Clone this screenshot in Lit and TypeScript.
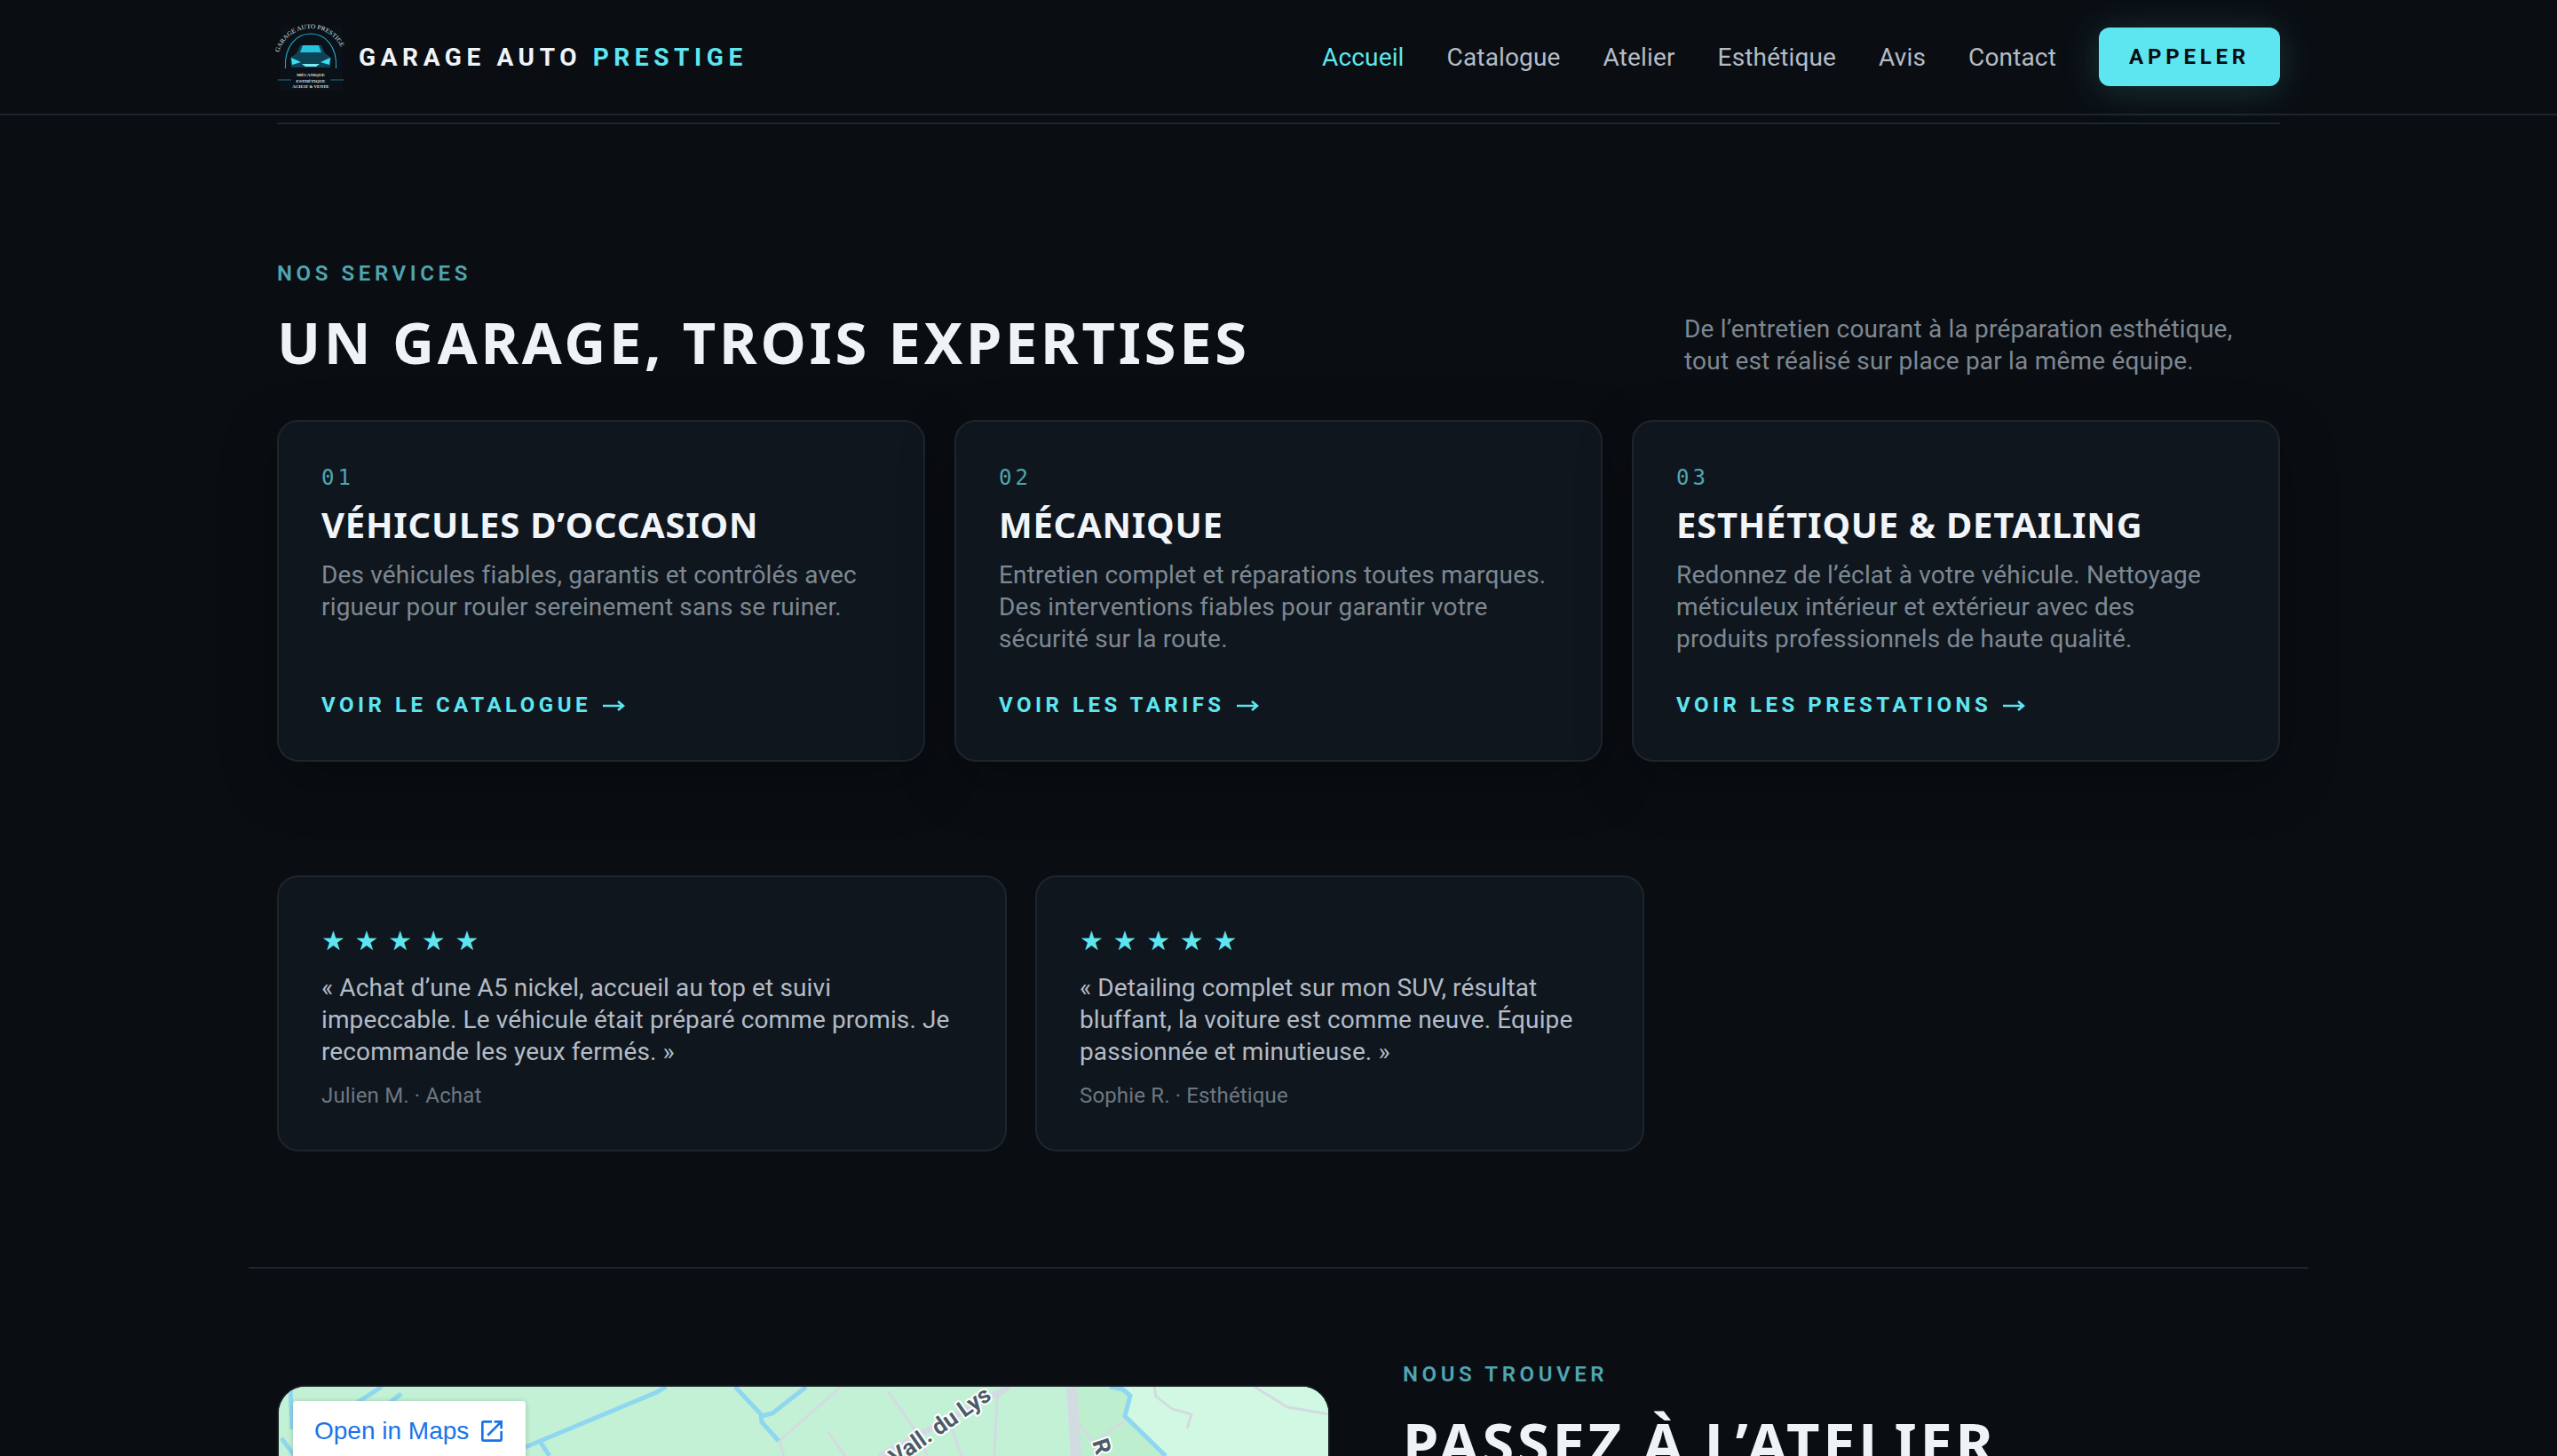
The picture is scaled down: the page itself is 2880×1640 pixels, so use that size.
import { LitElement, html, css, svg } from "lit";
import { customElement } from "lit/decorators.js";

const services = [
  { n: "01", t: "VÉHICULES D’OCCASION", d: ["Des véhicules fiables, garantis et contrôlés avec", "rigueur pour rouler sereinement sans se ruiner."], l: "VOIR LE CATALOGUE" },
  { n: "02", t: "MÉCANIQUE", d: ["Entretien complet et réparations toutes marques.", "Des interventions fiables pour garantir votre", "sécurité sur la route."], l: "VOIR LES TARIFS" },
  { n: "03", t: "ESTHÉTIQUE & DETAILING", d: ["Redonnez de l’éclat à votre véhicule. Nettoyage", "méticuleux intérieur et extérieur avec des", "produits professionnels de haute qualité."], l: "VOIR LES PRESTATIONS" },
];
const reviews = [
  { q: ["« Achat d’une A5 nickel, accueil au top et suivi", "impeccable. Le véhicule était préparé comme promis. Je", "recommande les yeux fermés. »"], a: "Julien M. · Achat" },
  { q: ["« Detailing complet sur mon SUV, résultat", "bluffant, la voiture est comme neuve. Équipe", "passionnée et minutieuse. »"], a: "Sophie R. · Esthétique" },
];
const nav = ["Accueil", "Catalogue", "Atelier", "Esthétique", "Avis", "Contact"];

const logo = html`<svg class="logo" viewBox="0 0 80 76" width="80" height="76" aria-hidden="true">
  <defs><path id="arc" d="M2 31 A37.5 37.5 0 0 1 74 31"></path></defs>
  <rect x="4" y="2" width="70" height="72" fill="#0a1118"></rect>
  <text font-family="Liberation Serif, serif" font-size="7" fill="#d8e2e8"><textPath href="#arc" textLength="90" lengthAdjust="spacingAndGlyphs">GARAGE AUTO PRESTIGE</textPath></text>
  <path d="M9.5 49 C8 24 22 10 38 10 C54 10 68 24 66.5 49" fill="none" stroke="#2aa7c0" stroke-width="1.1"></path>
  <path d="M26 23 L50 23 L54 32 L61 37 L60 48 L16 48 L15 37 L22 32 Z" fill="#0d4356"></path>
  <path d="M29 23 L47 23 L50 31 L26 31 Z" fill="#25c3de"></path>
  <path d="M16 37 L27 42 L17 45 Z M60 37 L49 42 L59 45 Z" fill="#3fdcf0"></path>
  <path d="M28 44 L48 44 L44 47 L32 47 Z" fill="#7fe9f5"></path>
  <g font-family="Liberation Serif, serif" font-size="5" font-weight="700" fill="#e3e9ec" text-anchor="middle">
    <text x="38" y="58">MÉCANIQUE</text><text x="38" y="64.5">ESTHÉTIQUE</text><text x="38" y="71">ACHAT &amp; VENTE</text>
  </g>
  <path d="M1 62H16M60 62H75" stroke="#2a8ba0" stroke-width=".8"></path>
</svg>`;

const arrow = html`<svg class="arrow" viewBox="0 0 26 16" width="26" height="16" aria-hidden="true"><path d="M1 8H24M18 3l6 5-6 5" fill="none" stroke="currentColor" stroke-width="2.6"></path></svg>`;

const W = "#8fd6f0", G = "#d3dbe2";
const water = ["M430 1562L402 1580", "M452 1570L436 1582", "M327 1562L329 1610", "M317 1620L332 1640", "M750 1562L740 1568L592 1630", "M609 1625L619 1640", "M828 1562L857 1593L858 1602L877 1623", "M857 1595L870 1592L908 1562", "M1250 1562L1265 1565L1273 1572L1267 1595L1313 1640"];
const thin = ["M947 1562L878 1623L883 1640", "M1000 1567L1030 1610L1045 1640", "M932 1612L952 1640", "M1072 1610L1083 1640", "M1137 1562L1123 1575L1120 1640", "M1215 1603L1232 1625L1267 1600", "M1300 1562L1302 1573L1320 1587L1342 1593L1337 1609", "M1413 1562L1450 1585L1497 1593"];
const map = html`<svg class="mapart" viewBox="314 1562 1182 78" preserveAspectRatio="xMinYMin slice" aria-hidden="true">
  <rect x="314" y="1562" width="1182" height="78" fill="#c3f1d5"></rect>
  <path d="M1210 1562H1260L1273 1572L1267 1595L1313 1640H1210Z" fill="#bdeece"></path>
  <path d="M1250 1562H1497V1640H1313L1267 1595L1273 1572L1265 1565Z" fill="#d1f8e2"></path>
  ${thin.map((d) => svg`<path d=${d} fill="none" stroke=${G} stroke-width="3"></path>`)}
  ${water.map((d) => svg`<path d=${d} fill="none" stroke=${W} stroke-width="5"></path>`)}
  <path d="M990 1640L1137 1562" fill="none" stroke=${G} stroke-width="7"></path>
  <path d="M1207 1562L1212 1640" fill="none" stroke=${G} stroke-width="12"></path>
  <g font-family="Roboto, sans-serif" font-size="26" font-weight="700" fill="#4d5b68" stroke="#fff" stroke-width="4" paint-order="stroke" stroke-linejoin="round">
    <text transform="translate(1118 1575) rotate(-35)" text-anchor="end">Vall. du Lys</text>
    <text transform="translate(1230 1624) rotate(72)">R</text>
  </g>
</svg>`;

@customElement("app-root")
export class AppRoot extends LitElement {
  static styles = css`
    :host { display: block; height: 1640px; overflow: hidden; background: #0a0e13; font-family: Roboto, "Noto Sans", sans-serif; color: #eef3f7; }
    * { box-sizing: border-box; }
    header { height: 130px; border-bottom: 2px solid #1e252d; }
    .bar { width: 2320px; height: 128px; margin: 0 auto; padding: 0 32px; display: flex; align-items: center; justify-content: space-between; }
    .brand { display: flex; align-items: center; gap: 12px; font-size: 28px; font-weight: 700; letter-spacing: 5.6px; color: #f0f4f8; }
    .logo { display: block; margin-top: 3px; letter-spacing: 0; font-weight: 400; overflow: visible; }
    .brand b { color: #5ee6f0; font-weight: 700; }
    nav { display: flex; align-items: center; gap: 48px; font-size: 28px; letter-spacing: 0.15px; color: #b4bcc6; }
    nav .on { color: #5ee6f0; }
    .btn { width: 204px; height: 66px; border-radius: 12px; background: #5ee6f0; color: #0a0e13; display: flex; align-items: center; justify-content: center; font-size: 24px; font-weight: 700; letter-spacing: 4.8px; box-shadow: 0 4px 44px rgba(94, 230, 240, 0.18); }
    main { width: 2320px; margin: 0 auto; }
    .rule { height: 2px; margin: 8px 32px 0; background: #1e252d; }
    .services { padding: 152px 32px 0; }
    .head { display: flex; justify-content: space-between; align-items: flex-end; }
    .eyebrow { font-size: 24px; line-height: 32px; font-weight: 600; letter-spacing: 4.6px; color: #4fa6b2; }
    h2 { margin: 21px 0 0; font-family: "Noto Sans", Roboto, sans-serif; font-size: 65px; line-height: 80px; font-weight: 700; letter-spacing: 3.7px; color: #eef3f7; }
    .lead { width: 671px; margin: 0; font-size: 28px; line-height: 36px; letter-spacing: 0.2px; color: #7e8892; }
    .line { display: block; white-space: nowrap; }
    .cards { margin-top: 48px; display: grid; grid-template-columns: repeat(3, 1fr); gap: 33px; }
    .card { display: flex; flex-direction: column; padding: 48px 48px 46px; border: 2px solid #1e252d; border-radius: 24px; background: #0f161e; box-shadow: 0 20px 60px rgba(0, 0, 0, 0.35); }
    .num { font-family: "DejaVu Sans Mono", monospace; font-size: 24px; line-height: 30px; letter-spacing: 4px; color: #4fa6b2; }
    h3 { margin: 14px 0 0; font-family: "Noto Sans", Roboto, sans-serif; font-size: 40px; line-height: 48px; font-weight: 700; letter-spacing: 0.75px; color: #f1f5f9; }
    .desc { margin: 15px 0 0; font-size: 28px; line-height: 36px; letter-spacing: 0.17px; color: #7e8892; }
    .link { margin-top: auto; padding-top: 40px; display: flex; align-items: center; gap: 12px; font-size: 24px; line-height: 32px; font-weight: 700; letter-spacing: 4.5px; color: #5ee6f0; }
    .arrow { display: block; margin-top: 2px; }
    .reviews { margin-top: 128px; display: grid; grid-template-columns: 822px 686px; gap: 32px; }
    .review { padding: 48px 48px 45px; border: 2px solid #1e252d; border-radius: 24px; background: #0f161e; }
    .stars { font-family: "DejaVu Sans", sans-serif; font-size: 30px; line-height: 48px; letter-spacing: 10.7px; color: #5ee6f0; }
    .quote { margin: 11px 0 0; font-size: 28px; line-height: 36px; letter-spacing: 0.12px; color: #b4bcc6; }
    .author { margin-top: 15px; font-size: 24px; line-height: 32px; letter-spacing: 0.15px; color: #6d7782; }
    .divider { height: 2px; margin-top: 130px; background: #1e252d; }
    .contact { padding: 103px 32px 0; display: grid; grid-template-columns: 1186px 988px; gap: 82px; }
    .map { position: relative; margin-top: 28px; height: 400px; border: 2px solid #161c23; border-radius: 32px; overflow: hidden; background: #c3f1d5; }
    .mapart { display: block; width: 1182px; height: 78px; }
    .open { position: absolute; left: 16px; top: 16px; width: 262px; height: 120px; padding: 16px 0 0 24px; background: #fff; border-radius: 4px; box-shadow: 0 1px 6px rgba(0,0,0,.2); display: flex; align-items: flex-start; gap: 10px; font-family: "Liberation Sans", Arial, sans-serif; font-size: 28px; line-height: 36px; color: #1a73e8; }
    .open svg { display: block; margin-top: 2px; }
  `;

  render() {
    return html`
      <header><div class="bar">
        <div class="brand">${logo}<span>GARAGE AUTO <b>PRESTIGE</b></span></div>
        <nav>
          ${nav.map((n, i) => html`<span class=${i === 0 ? "on" : ""}>${n}</span>`)}
          <span class="btn">APPELER</span>
        </nav>
      </div></header>
      <main>
        <div class="rule"></div>
        <section class="services">
          <div class="head">
            <div><div class="eyebrow">NOS SERVICES</div><h2>UN GARAGE, TROIS EXPERTISES</h2></div>
            <p class="lead"><span class="line">De l’entretien courant à la préparation esthétique,</span><span class="line">tout est réalisé sur place par la même équipe.</span></p>
          </div>
          <div class="cards">
            ${services.map((s) => html`<article class="card">
              <div class="num">${s.n}</div>
              <h3>${s.t}</h3>
              <p class="desc">${s.d.map((l) => html`<span class="line">${l}</span>`)}</p>
              <div class="link">${s.l} ${arrow}</div>
            </article>`)}
          </div>
          <div class="reviews">
            ${reviews.map((r) => html`<article class="review">
              <div class="stars">★★★★★</div>
              <p class="quote">${r.q.map((l) => html`<span class="line">${l}</span>`)}</p>
              <div class="author">${r.a}</div>
            </article>`)}
          </div>
        </section>
        <div class="divider"></div>
        <section class="contact">
          <div class="map">
            ${map}
            <div class="open"><span>Open in Maps</span>
              <svg viewBox="0 0 24 24" width="32" height="32" fill="#1a73e8" aria-hidden="true"><path d="M19 19H5V5h7V3H5a2 2 0 0 0-2 2v14a2 2 0 0 0 2 2h14c1.1 0 2-.9 2-2v-7h-2v7zM14 3v2h3.59l-9.83 9.83 1.41 1.41L19 6.41V10h2V3h-7z"></path></svg>
            </div>
          </div>
          <div>
            <div class="eyebrow">NOUS TROUVER</div>
            <h2>PASSEZ À L’ATELIER</h2>
          </div>
        </section>
      </main>
    `;
  }
}
